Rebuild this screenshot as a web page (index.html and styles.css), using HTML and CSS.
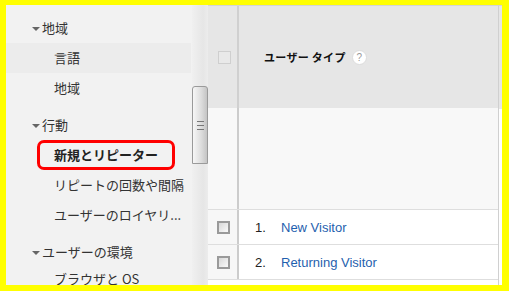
FILE: index.html
```html
<!DOCTYPE html>
<html lang="ja">
<head>
    <meta charset="UTF-8">
    <title>ユーザー タイプ</title>
    <link rel="stylesheet" href="styles.css">
</head>
<body>
<div class="frame">

    <!-- 左側メニュー -->
    <div class="sidebar">
        <div class="nav-head"><span class="caret"></span>地域</div>
        <div class="nav-item hover">言語</div>
        <div class="nav-item">地域</div>

        <div class="nav-head group"><span class="caret"></span>行動</div>
        <div class="nav-item active">新規とリピーター</div>
        <div class="nav-item">リピートの回数や間隔</div>
        <div class="nav-item">ユーザーのロイヤリ...</div>

        <div class="nav-head group"><span class="caret"></span>ユーザーの環境</div>
        <div class="nav-item last">ブラウザと OS</div>
    </div>

    <div class="scrollbar">
        <div class="thumb"><span class="grip"></span></div>
    </div>

    <!-- 表 -->
    <div class="report">
        <div class="table">
            <div class="row head">
                <div class="cell-check"><span class="box light"></span></div>
                <div class="cell-main">
                    <span class="col-title">ユーザー タイプ</span>
                    <span class="help">?</span>
                </div>
            </div>
            <div class="row empty">
                <div class="cell-check"></div>
                <div class="cell-main"></div>
            </div>
            <div class="row data">
                <div class="cell-check"><span class="box"></span></div>
                <div class="cell-main"><span class="num">1.</span><a href="#">New Visitor</a></div>
            </div>
            <div class="row data">
                <div class="cell-check"><span class="box"></span></div>
                <div class="cell-main"><span class="num">2.</span><a href="#">Returning Visitor</a></div>
            </div>
        </div>
        <div class="edge"></div>
    </div>

</div>
</body>
</html>
```

FILE: styles.css
```css
body { margin: 0; background: #ffff00; font-family: "Noto Sans CJK JP", sans-serif; }
.frame { display: flex; height: 280px; margin: 5px 7px 6px 6px; background: #fff; overflow: hidden; }

.sidebar { width: 186px; background: #f2f2f2; padding-top: 8px; font-size: 13px; color: #333; }
.nav-head, .nav-item { height: 30px; line-height: 30px; white-space: nowrap; }
.nav-head { padding-left: 26px; }
.nav-head.group { margin-top: 7px; }
.caret { display: inline-block; width: 0; height: 0; border-left: 4px solid transparent; border-right: 4px solid transparent; border-top: 4px solid #666; vertical-align: middle; margin-right: 2px; }
.nav-item { padding-left: 48px; }
.nav-item.hover { background: #ececec; margin-right: 1px; }
.nav-item.active { margin-left: 31px; width: 118px; height: 24px; line-height: 24px; padding-left: 14px; border: 3px solid #ff0000; border-radius: 7px; font-weight: bold; color: #222; }
.nav-item.last { margin-top: -3px; }

.scrollbar { width: 16px; background: linear-gradient(to right, #f0f0f0, #e6e6e6 70%, #ececec); }
.thumb { margin-top: 81px; height: 76px; border: 1px solid #9a9a9a; border-radius: 3px 3px 0 0; background: linear-gradient(to right, #f7f7f7, #dcdcdc 60%, #c4c4c4); display: flex; align-items: center; justify-content: center; }
.grip { width: 7px; height: 7px; border-top: 1px solid #777; border-bottom: 1px solid #777; background: linear-gradient(#777, #777) center / 7px 1px no-repeat; margin-top: 1px; }

.report { flex: 1; display: flex; }
.table { width: 290px; border-top: 1px solid #d4d4d4; border-right: 1px solid #d0d0d0; }
.row { display: flex; border-bottom: 1px solid #dedede; }
.cell-check { width: 29px; border-right: 2px solid #cccccc; display: flex; align-items: center; justify-content: center; }
.cell-main { flex: 1; display: flex; align-items: center; }

.head { height: 102px; background: #e6e6e6; border-bottom: none; }
.head .cell-check { border-right-color: #d0d0d0; }
.head .cell-main { padding-left: 25px; }
.col-title { font-size: 11px; font-weight: bold; color: #111; letter-spacing: 0.3px; }
.help { width: 15px; height: 15px; margin-left: 6px; border-radius: 50%; background: #fff; border: 1px solid #dcdcdc; box-sizing: border-box; font: 10px "Liberation Sans", sans-serif; color: #999; display: flex; align-items: center; justify-content: center; }

.empty { height: 101px; background: #f8f8f8; }
.data { height: 34px; }
.data .cell-check { background: #f7f7f7; }
.data .cell-main { background: #fff; padding-left: 16px; font: 13px "Liberation Sans", Arial, sans-serif; }
.num { width: 26px; color: #222; }
.data a { color: #1f5fae; text-decoration: none; }

.box { width: 13px; height: 13px; box-sizing: border-box; border: 2px solid #9a9a9a; background: linear-gradient(135deg, #d8d8d8, #fafafa); margin-left: 1px; }
.box.light { border: 1px solid #cfcfcf; background: #e9e9e9; margin-left: 3px; }

.edge { flex: 1; background: linear-gradient(#e6e6e6, #e6e6e6) top / 100% 103px no-repeat; border-top: 1px solid #d4d4d4; }
```
